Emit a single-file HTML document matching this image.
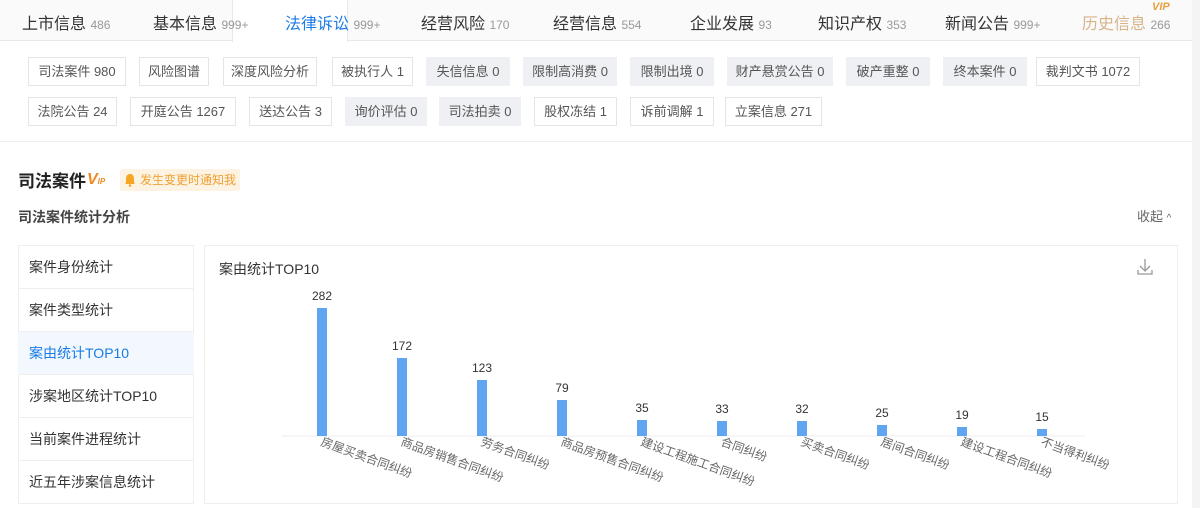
<!DOCTYPE html>
<html><head><meta charset="utf-8"><style>
*{margin:0;padding:0;box-sizing:border-box}
body{width:1200px;height:508px;overflow:hidden;background:#fff;font-family:"Liberation Sans","Noto Sans CJK SC",sans-serif;color:#333;position:relative}
.abs{position:absolute}
.tabs{left:0;top:0;width:1192px;height:41px;background:#fafafa;border-bottom:1px solid #e8e8e8}
.tab{position:absolute;top:10px;font-size:16px;color:#333;white-space:nowrap}
.tab small{font-size:12px;color:#999}
.act{left:232px;top:0;width:116px;height:42px;background:#fff;border-left:1px solid #e8e8e8;border-right:1px solid #e8e8e8}
.tag{position:absolute;height:29px;line-height:27px;border:1px solid #e4e4e4;font-size:13px;color:#555;text-align:center;background:#fff}
.tag.g{background:#eef0f4;border-color:#eef0f4}
.li{position:absolute;left:18px;width:176px;height:43px;line-height:43px;padding-left:11px;font-size:14px;color:#333;border-bottom:1px solid #eee}
</style></head><body>
<div class="abs" style="left:0;top:0;width:3px;height:40px;background:#5a9ae6"></div>
<div class="abs" style="left:1192px;top:0;width:8px;height:508px;background:#f3f4f6"></div>
<div class="abs tabs"></div>
<div class="abs act"></div>
<div class="tab" style="left:22px">上市信息 <small>486</small></div>
<div class="tab" style="left:153px">基本信息 <small>999+</small></div>
<div class="tab" style="left:285px;color:#1a7be6">法律诉讼 <small>999+</small></div>
<div class="tab" style="left:421px">经营风险 <small>170</small></div>
<div class="tab" style="left:553px">经营信息 <small>554</small></div>
<div class="tab" style="left:690px">企业发展 <small>93</small></div>
<div class="tab" style="left:818px">知识产权 <small>353</small></div>
<div class="tab" style="left:945px">新闻公告 <small>999+</small></div>
<div class="tab" style="left:1082px;color:#d8b48a">历史信息 <small>266</small></div>
<div class="abs" style="left:1152px;top:1px;font-size:11px;font-weight:bold;color:#e8a040;font-style:italic">VIP</div>

<div class="tag" style="left:28px;top:57px;width:98px">司法案件 980</div>
<div class="tag" style="left:139px;top:57px;width:70px">风险图谱</div>
<div class="tag" style="left:223px;top:57px;width:94px">深度风险分析</div>
<div class="tag" style="left:332px;top:57px;width:81px">被执行人 1</div>
<div class="tag g" style="left:426px;top:57px;width:84px">失信信息 0</div>
<div class="tag g" style="left:523px;top:57px;width:94px">限制高消费 0</div>
<div class="tag g" style="left:630px;top:57px;width:84px">限制出境 0</div>
<div class="tag g" style="left:727px;top:57px;width:106px">财产悬赏公告 0</div>
<div class="tag g" style="left:846px;top:57px;width:84px">破产重整 0</div>
<div class="tag g" style="left:943px;top:57px;width:84px">终本案件 0</div>
<div class="tag" style="left:1036px;top:57px;width:104px">裁判文书 1072</div>
<div class="tag" style="left:28px;top:97px;width:89px">法院公告 24</div>
<div class="tag" style="left:130px;top:97px;width:106px">开庭公告 1267</div>
<div class="tag" style="left:249px;top:97px;width:83px">送达公告 3</div>
<div class="tag g" style="left:345px;top:97px;width:82px">询价评估 0</div>
<div class="tag g" style="left:439px;top:97px;width:82px">司法拍卖 0</div>
<div class="tag" style="left:534px;top:97px;width:83px">股权冻结 1</div>
<div class="tag" style="left:630px;top:97px;width:84px">诉前调解 1</div>
<div class="tag" style="left:725px;top:97px;width:97px">立案信息 271</div>
<div class="abs" style="left:0;top:141px;width:1192px;height:1px;background:#eee"></div>

<div class="abs" style="left:18px;top:167px;font-size:17px;font-weight:bold;color:#222">司法案件</div>
<div class="abs" style="left:87px;top:170px;font-size:16px;font-weight:bold;font-style:italic;color:#f08a24;line-height:20px">V<span style="font-size:8px">IP</span></div>
<div class="abs" style="left:120px;top:169px;width:120px;height:22px;background:#fdf3e3;border-radius:2px;font-size:12px;line-height:22px;color:#f0a030;padding-left:20px">发生变更时通知我</div>
<svg class="abs" style="left:124px;top:173px" width="12" height="14"><path d="M6 1C3 1 2 3.5 2 6v3.5L1 11h10l-1-1.5V6C10 3.5 9 1 6 1z" fill="#f5a623"/><circle cx="6" cy="12.5" r="1.3" fill="#f5a623"/></svg>
<div class="abs" style="left:18px;top:207px;font-size:14px;font-weight:bold;color:#444">司法案件统计分析</div>
<div class="abs" style="left:1137px;top:206px;font-size:13px;color:#666">收起 <span style="font-size:10px">^</span></div>

<div class="abs" style="left:18px;top:245px;width:176px;height:259px;border:1px solid #eee"></div>
<div class="li" style="top:246px">案件身份统计</div>
<div class="li" style="top:289px">案件类型统计</div>
<div class="li" style="top:332px;background:#f2f8fd;color:#1a7be6">案由统计TOP10</div>
<div class="li" style="top:375px">涉案地区统计TOP10</div>
<div class="li" style="top:418px">当前案件进程统计</div>
<div class="li" style="top:461px;border-bottom:none">近五年涉案信息统计</div>

<div class="abs" style="left:204px;top:245px;width:974px;height:259px;border:1px solid #eee"></div>
<div class="abs" style="left:219px;top:259px;font-size:14px;color:#333">案由统计TOP10</div>
<svg class="abs" style="left:0;top:0" width="1200" height="508">
<g stroke="#999" stroke-width="1.3" fill="none"><path d="M1145 259v12M1140 266l5 5 5-5M1138 270v4h14v-4"/></g>
<line x1="282" y1="436" x2="1085" y2="436" stroke="#eee"/>
<g fill="#60a5f0">
<rect x="317" y="308" width="10" height="128"/>
<rect x="397" y="358" width="10" height="78"/>
<rect x="477" y="380" width="10" height="56"/>
<rect x="557" y="400" width="10" height="36"/>
<rect x="637" y="420" width="10" height="16"/>
<rect x="717" y="421" width="10" height="15"/>
<rect x="797" y="421" width="10" height="15"/>
<rect x="877" y="425" width="10" height="11"/>
<rect x="957" y="427" width="10" height="9"/>
<rect x="1037" y="429" width="10" height="7"/>
</g>
<g font-size="12" fill="#333" text-anchor="middle" font-family="Liberation Sans,sans-serif">
<text x="322" y="300">282</text><text x="402" y="350">172</text><text x="482" y="372">123</text><text x="562" y="392">79</text><text x="642" y="412">35</text><text x="722" y="413">33</text><text x="802" y="413">32</text><text x="882" y="417">25</text><text x="962" y="419">19</text><text x="1042" y="421">15</text>
</g>
<g font-size="12" fill="#666" font-family="Liberation Sans,Noto Sans CJK SC,sans-serif">
<text transform="translate(320,445) rotate(20)">房屋买卖合同纠纷</text>
<text transform="translate(400,445) rotate(20)">商品房销售合同纠纷</text>
<text transform="translate(480,445) rotate(20)">劳务合同纠纷</text>
<text transform="translate(560,445) rotate(20)">商品房预售合同纠纷</text>
<text transform="translate(640,445) rotate(20)">建设工程施工合同纠纷</text>
<text transform="translate(720,445) rotate(20)">合同纠纷</text>
<text transform="translate(800,445) rotate(20)">买卖合同纠纷</text>
<text transform="translate(880,445) rotate(20)">居间合同纠纷</text>
<text transform="translate(960,445) rotate(20)">建设工程合同纠纷</text>
<text transform="translate(1040,445) rotate(20)">不当得利纠纷</text>
</g>
</svg>
</body></html>
